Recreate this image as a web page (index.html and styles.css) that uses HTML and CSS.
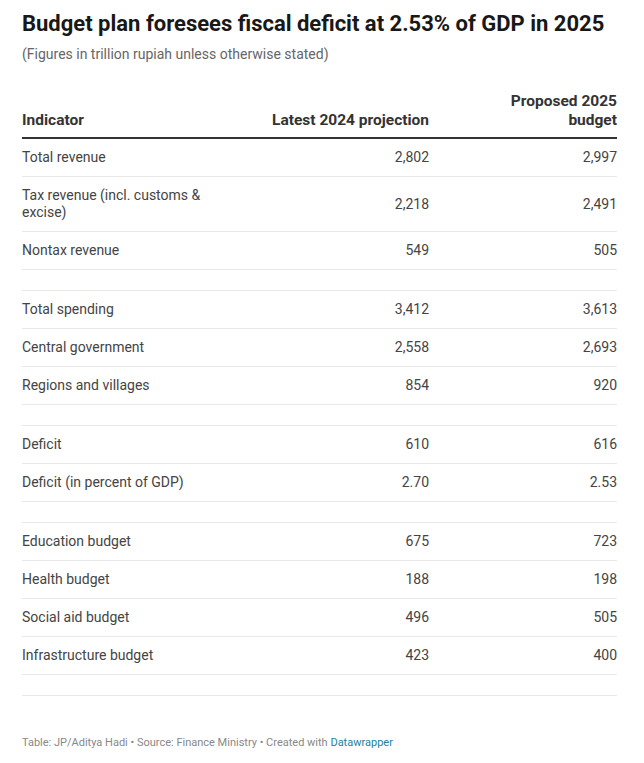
FILE: index.html
```html
<!DOCTYPE html>
<html>
<head>
<meta charset="utf-8">
<link rel="stylesheet" href="styles.css">
</head>
<body>
<div class="chart">
  <h1 class="title">Budget plan foresees fiscal deficit at 2.53% of GDP in 2025</h1>
  <p class="subtitle">(Figures in trillion rupiah unless otherwise stated)</p>
  <table class="tbl">
    <colgroup><col class="c1"><col class="c2"><col class="c3"></colgroup>
    <thead>
      <tr><th class="l">Indicator</th><th class="r">Latest 2024 projection</th><th class="r last">Proposed 2025 budget</th></tr>
    </thead>
    <tbody>
      <tr><td>Total revenue</td><td class="r">2,802</td><td class="r">2,997</td></tr>
      <tr><td>Tax revenue (incl. customs &amp; excise)</td><td class="r">2,218</td><td class="r">2,491</td></tr>
      <tr><td>Nontax revenue</td><td class="r">549</td><td class="r">505</td></tr>
      <tr class="sp"><td></td><td></td><td></td></tr>
      <tr><td>Total spending</td><td class="r">3,412</td><td class="r">3,613</td></tr>
      <tr><td>Central government</td><td class="r">2,558</td><td class="r">2,693</td></tr>
      <tr><td>Regions and villages</td><td class="r">854</td><td class="r">920</td></tr>
      <tr class="sp"><td></td><td></td><td></td></tr>
      <tr><td>Deficit</td><td class="r">610</td><td class="r">616</td></tr>
      <tr><td>Deficit (in percent of GDP)</td><td class="r">2.70</td><td class="r">2.53</td></tr>
      <tr class="sp"><td></td><td></td><td></td></tr>
      <tr><td>Education budget</td><td class="r">675</td><td class="r">723</td></tr>
      <tr><td>Health budget</td><td class="r">188</td><td class="r">198</td></tr>
      <tr><td>Social aid budget</td><td class="r">496</td><td class="r">505</td></tr>
      <tr><td>Infrastructure budget</td><td class="r">423</td><td class="r">400</td></tr>
      <tr class="sp"><td></td><td></td><td></td></tr>
    </tbody>
  </table>
  <p class="footer">Table: JP/Aditya Hadi • Source: Finance Ministry • Created with <a class="dw" href="#">Datawrapper</a></p>
</div>
</body>
</html>
```
FILE: styles.css
```css
* { box-sizing: border-box; }
html, body { margin: 0; padding: 0; background: #fff; }
body { font-family: Roboto, "Liberation Sans", sans-serif; color: #333; }
.chart { width: 595px; margin-left: 22px; padding-top: 10px; }
.title { font-size: 22px; font-weight: 700; line-height: 27px; margin: 0; color: #181818; }
.subtitle { font-size: 14px; line-height: 18px; margin: 8px 0 0; color: #666; }
.tbl { width: 595px; table-layout: fixed; border-collapse: collapse; margin-top: 29px; font-size: 14px; }
.c1 { width: 210px; }
.c2 { width: 197px; }
.c3 { width: 188px; }
th { font-size: 15.5px; font-weight: 700; color: #333; line-height: 19px; padding: 0 0 7px; vertical-align: bottom; border-bottom: 2px solid #333; }
th.l { text-align: left; }
th.r { text-align: right; }
th.last { padding-left: 50px; }
td { padding: 10px 0; line-height: 17px; color: #444; border-bottom: 1px solid #e8e8e8; vertical-align: middle; }
td:first-child { padding-right: 12px; }
td.r { text-align: right; }
tr.sp td { height: 21px; padding: 0; }
.footer { margin: 40px 0 0; font-size: 11px; line-height: 14px; color: #888; }
.dw { color: #1d81a2; text-decoration: none; }
```
